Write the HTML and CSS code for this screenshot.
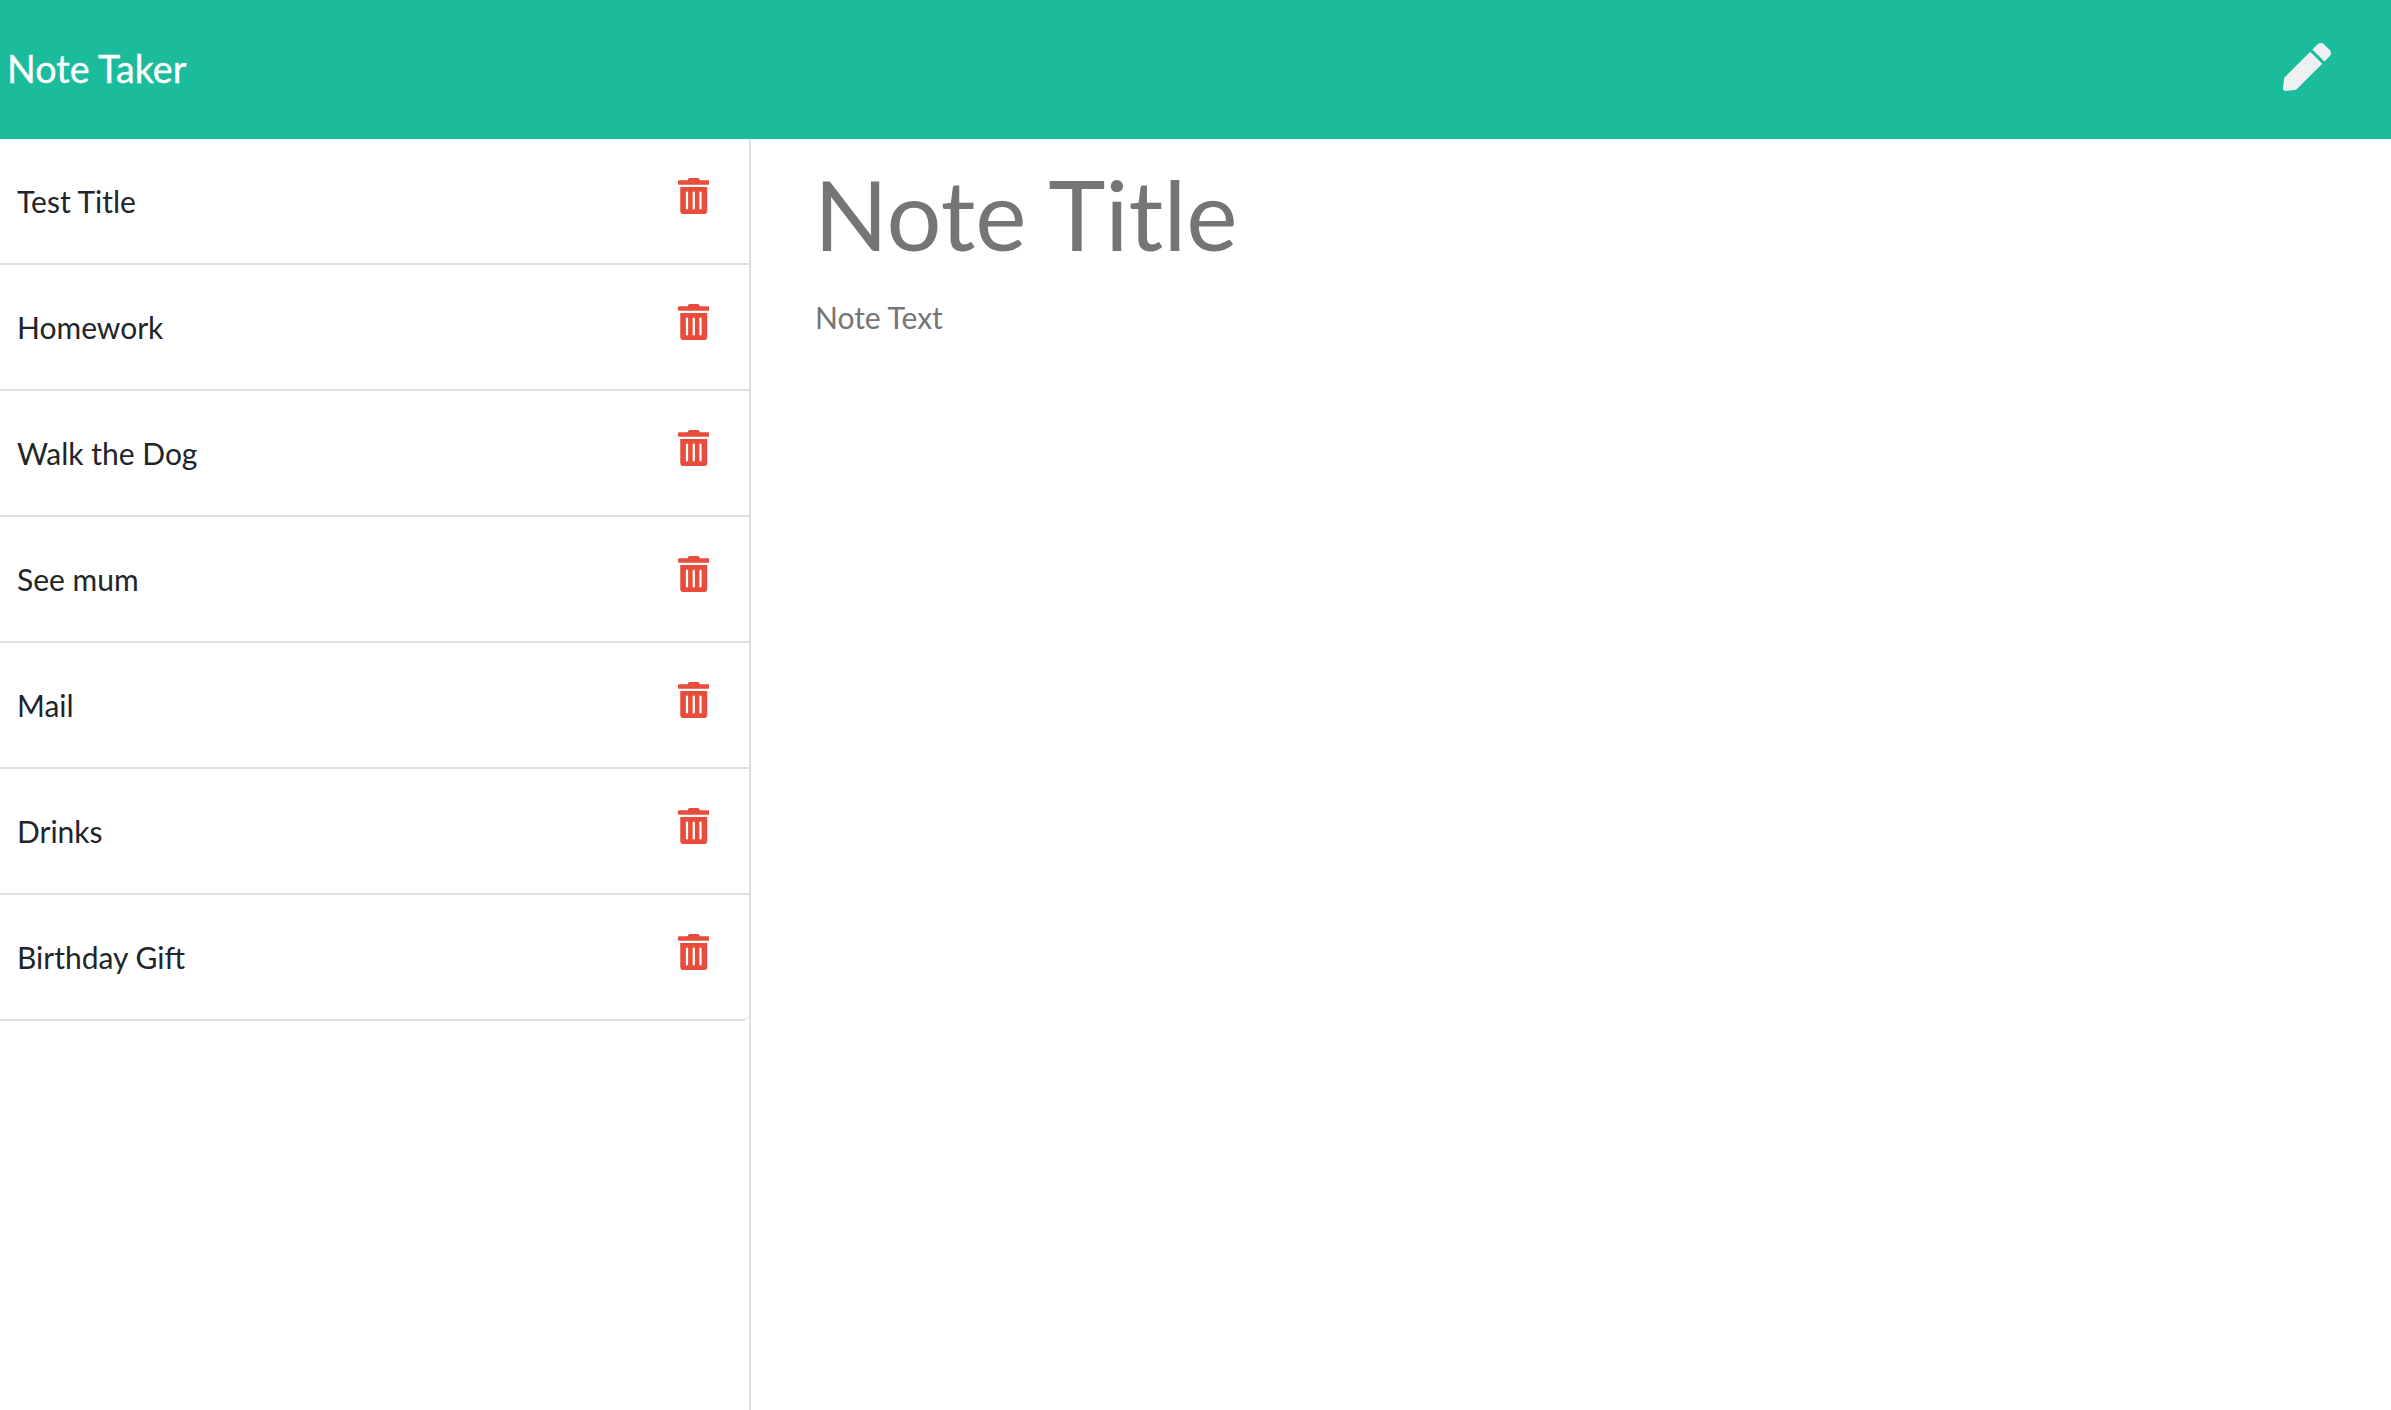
FILE: index.html
```html
<!DOCTYPE html>
<html lang="en">
<head>
    <meta charset="UTF-8">
    <title>Note Taker</title>
    <link rel="stylesheet" href="styles.css">
</head>
<body>
    <!-- Header -->
    <div class="header">
        <div class="brand">Note Taker</div>
        <svg class="new-note" viewBox="0 0 512 512"><path d="M290.74 93.24l128.02 128.02-277.99 277.99-114.14 12.6C11.35 513.54-1.56 500.62.14 485.34l12.7-114.22 277.9-277.88zm207.2-19.06l-60.11-60.11c-18.75-18.75-49.16-18.75-67.91 0l-56.55 56.55 128.02 128.02 56.55-56.55c18.75-18.76 18.75-49.16 0-67.91z"/></svg>
    </div>

    <div class="container">
        <!-- Notes list -->
        <div class="sidebar">
            <ul class="note-list">
                <li class="note-item"><span>Test Title</span><svg class="delete-note" viewBox="0 0 448 512"><path d="M32 464a48 48 0 0 0 48 48h288a48 48 0 0 0 48-48V128H32zm272-256a16 16 0 0 1 32 0v224a16 16 0 0 1-32 0zm-96 0a16 16 0 0 1 32 0v224a16 16 0 0 1-32 0zm-96 0a16 16 0 0 1 32 0v224a16 16 0 0 1-32 0zM432 32H312l-9.4-18.7A24 24 0 0 0 281.1 0H166.8a23.72 23.72 0 0 0-21.4 13.3L136 32H16A16 16 0 0 0 0 48v32a16 16 0 0 0 16 16h416a16 16 0 0 0 16-16V48a16 16 0 0 0-16-16z"/></svg></li>
                <li class="note-item"><span>Homework</span><svg class="delete-note" viewBox="0 0 448 512"><path d="M32 464a48 48 0 0 0 48 48h288a48 48 0 0 0 48-48V128H32zm272-256a16 16 0 0 1 32 0v224a16 16 0 0 1-32 0zm-96 0a16 16 0 0 1 32 0v224a16 16 0 0 1-32 0zm-96 0a16 16 0 0 1 32 0v224a16 16 0 0 1-32 0zM432 32H312l-9.4-18.7A24 24 0 0 0 281.1 0H166.8a23.72 23.72 0 0 0-21.4 13.3L136 32H16A16 16 0 0 0 0 48v32a16 16 0 0 0 16 16h416a16 16 0 0 0 16-16V48a16 16 0 0 0-16-16z"/></svg></li>
                <li class="note-item"><span>Walk the Dog</span><svg class="delete-note" viewBox="0 0 448 512"><path d="M32 464a48 48 0 0 0 48 48h288a48 48 0 0 0 48-48V128H32zm272-256a16 16 0 0 1 32 0v224a16 16 0 0 1-32 0zm-96 0a16 16 0 0 1 32 0v224a16 16 0 0 1-32 0zm-96 0a16 16 0 0 1 32 0v224a16 16 0 0 1-32 0zM432 32H312l-9.4-18.7A24 24 0 0 0 281.1 0H166.8a23.72 23.72 0 0 0-21.4 13.3L136 32H16A16 16 0 0 0 0 48v32a16 16 0 0 0 16 16h416a16 16 0 0 0 16-16V48a16 16 0 0 0-16-16z"/></svg></li>
                <li class="note-item"><span>See mum</span><svg class="delete-note" viewBox="0 0 448 512"><path d="M32 464a48 48 0 0 0 48 48h288a48 48 0 0 0 48-48V128H32zm272-256a16 16 0 0 1 32 0v224a16 16 0 0 1-32 0zm-96 0a16 16 0 0 1 32 0v224a16 16 0 0 1-32 0zm-96 0a16 16 0 0 1 32 0v224a16 16 0 0 1-32 0zM432 32H312l-9.4-18.7A24 24 0 0 0 281.1 0H166.8a23.72 23.72 0 0 0-21.4 13.3L136 32H16A16 16 0 0 0 0 48v32a16 16 0 0 0 16 16h416a16 16 0 0 0 16-16V48a16 16 0 0 0-16-16z"/></svg></li>
                <li class="note-item"><span>Mail</span><svg class="delete-note" viewBox="0 0 448 512"><path d="M32 464a48 48 0 0 0 48 48h288a48 48 0 0 0 48-48V128H32zm272-256a16 16 0 0 1 32 0v224a16 16 0 0 1-32 0zm-96 0a16 16 0 0 1 32 0v224a16 16 0 0 1-32 0zm-96 0a16 16 0 0 1 32 0v224a16 16 0 0 1-32 0zM432 32H312l-9.4-18.7A24 24 0 0 0 281.1 0H166.8a23.72 23.72 0 0 0-21.4 13.3L136 32H16A16 16 0 0 0 0 48v32a16 16 0 0 0 16 16h416a16 16 0 0 0 16-16V48a16 16 0 0 0-16-16z"/></svg></li>
                <li class="note-item"><span>Drinks</span><svg class="delete-note" viewBox="0 0 448 512"><path d="M32 464a48 48 0 0 0 48 48h288a48 48 0 0 0 48-48V128H32zm272-256a16 16 0 0 1 32 0v224a16 16 0 0 1-32 0zm-96 0a16 16 0 0 1 32 0v224a16 16 0 0 1-32 0zm-96 0a16 16 0 0 1 32 0v224a16 16 0 0 1-32 0zM432 32H312l-9.4-18.7A24 24 0 0 0 281.1 0H166.8a23.72 23.72 0 0 0-21.4 13.3L136 32H16A16 16 0 0 0 0 48v32a16 16 0 0 0 16 16h416a16 16 0 0 0 16-16V48a16 16 0 0 0-16-16z"/></svg></li>
                <li class="note-item"><span>Birthday Gift</span><svg class="delete-note" viewBox="0 0 448 512"><path d="M32 464a48 48 0 0 0 48 48h288a48 48 0 0 0 48-48V128H32zm272-256a16 16 0 0 1 32 0v224a16 16 0 0 1-32 0zm-96 0a16 16 0 0 1 32 0v224a16 16 0 0 1-32 0zm-96 0a16 16 0 0 1 32 0v224a16 16 0 0 1-32 0zM432 32H312l-9.4-18.7A24 24 0 0 0 281.1 0H166.8a23.72 23.72 0 0 0-21.4 13.3L136 32H16A16 16 0 0 0 0 48v32a16 16 0 0 0 16 16h416a16 16 0 0 0 16-16V48a16 16 0 0 0-16-16z"/></svg></li>
            </ul>
        </div>

        <!-- Note editor -->
        <div class="editor">
            <div class="note-title">Note Title</div>
            <div class="note-text">Note Text</div>
        </div>
    </div>
</body>
</html>
```

FILE: styles.css
```css
html, body {
    height: 100%;
}

body {
    font-family: 'Lato', sans-serif;
    background: white;
    margin: 0;
    display: flex;
    flex-direction: column;
    overflow: hidden;
}

.header {
    background: #1abc9c;
    height: 139px;
    flex: none;
    display: flex;
    align-items: center;
    justify-content: space-between;
    padding: 0 60px 0 7px;
}

.brand {
    color: white;
    font-size: 37.7px;
    margin-top: -2px;
    -webkit-text-stroke: 0.3px white;
}

.new-note {
    width: 48px;
    height: 48px;
    fill: #ecf0f1;
    margin-top: -5px;
}

.container {
    flex: 1;
    display: flex;
}

.sidebar {
    width: 751px;
    box-sizing: border-box;
    border-right: 2px solid #dfdfdf;
}

.note-list {
    list-style: none;
    margin: 0;
    padding: 0;
}

.note-item {
    height: 126px;
    box-sizing: border-box;
    border-bottom: 2px solid #dfdfdf;
    display: flex;
    align-items: center;
    justify-content: space-between;
    padding: 0 40px 0 17px;
    font-size: 30px;
    color: #212529;
}

.note-item:last-child {
    border-bottom-right-radius: 6px;
}

.delete-note {
    width: 31.5px;
    height: 36px;
    fill: #e74c3c;
    margin-top: -10px;
}

.editor {
    flex: 1;
    padding: 0 0 0 64px;
    color: #757575;
}

.note-title {
    font-size: 97px;
    line-height: 116px;
    margin-top: 17px;
    margin-left: -1px;
}

.note-text {
    font-size: 30px;
    line-height: 45px;
    margin-top: 23px;
}
```
